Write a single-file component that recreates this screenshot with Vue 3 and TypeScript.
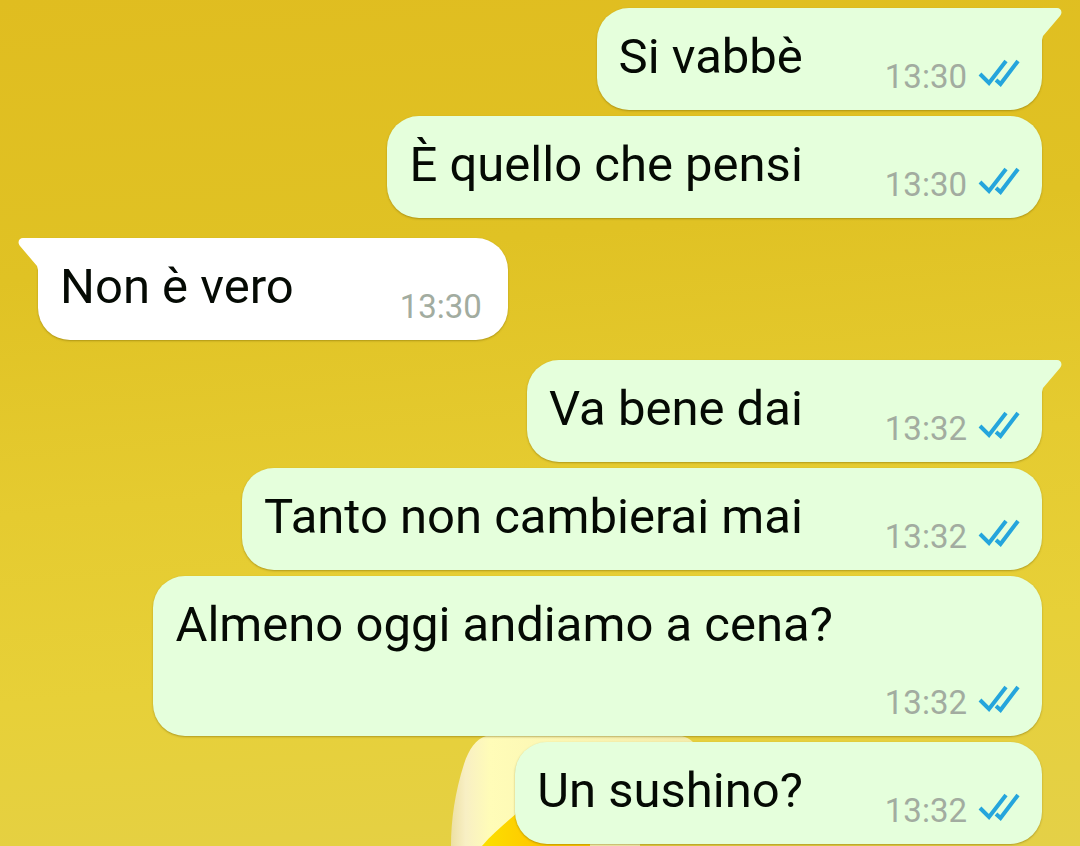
<script setup lang="ts">
interface Message {
  id: number
  text: string
  time: string
  sent: boolean
  first: boolean
}

const messages: Message[] = [
  { id: 1, text: 'Si vabbè', time: '13:30', sent: true, first: true },
  { id: 2, text: 'È quello che pensi', time: '13:30', sent: true, first: false },
  { id: 3, text: 'Non è vero', time: '13:30', sent: false, first: true },
  { id: 4, text: 'Va bene dai', time: '13:32', sent: true, first: true },
  { id: 5, text: 'Tanto non cambierai mai', time: '13:32', sent: true, first: false },
  { id: 6, text: 'Almeno oggi andiamo a cena?', time: '13:32', sent: true, first: false },
  { id: 7, text: 'Un sushino?', time: '13:32', sent: true, first: false },
]
</script>

<template>
  <main class="chat">
    <svg class="wallpaper" viewBox="0 0 260 110" aria-hidden="true">
      <defs>
        <linearGradient id="shell" x1="0" y1="0" x2="1" y2="0">
          <stop offset="0" stop-color="#ece0a4" />
          <stop offset="0.06" stop-color="#f8efc4" />
          <stop offset="0.16" stop-color="#fffcb8" />
          <stop offset="1" stop-color="#f4ecac" />
        </linearGradient>
        <linearGradient id="yolk" x1="0" y1="0" x2="1" y2="0">
          <stop offset="0" stop-color="#fbe000" />
          <stop offset="0.5" stop-color="#ffc800" />
        </linearGradient>
      </defs>
      <path d="M1 110C1 84 5 56 14 28C19 13 26 3 36 0H232C236 1 240 3 243 6V90H190V110Z" fill="url(#shell)" />
      <path d="M32 110C43 97 55 88 70 74H140V110Z" fill="url(#yolk)" />
    </svg>
    <ol class="messages">
      <li
        v-for="m in messages"
        :key="m.id"
        class="bubble"
        :class="{ sent: m.sent, received: !m.sent, first: m.first }"
      >
        <svg v-if="m.first" class="tail" viewBox="0 0 20 32" aria-hidden="true">
          <path d="M0 0H15C19 0 21 4 18 8L1 28L0 32Z" fill="currentColor" />
        </svg>
        <span class="text">{{ m.text }}</span>
        <span class="meta">
          <time>{{ m.time }}</time>
          <svg v-if="m.sent" class="ticks" viewBox="0 0 42 28" role="img" aria-label="Letto">
            <path d="M2 15L11 24L28 2M18 21L22.500 25L40 2" />
          </svg>
        </span>
      </li>
    </ol>
  </main>
</template>

<style>
body {
  margin: 0;
}
</style>

<style scoped>
.chat {
  position: relative;
  box-sizing: border-box;
  min-height: 100vh;
  overflow: hidden;
  padding: 8px 38px 2px;
  background: linear-gradient(175deg, #e0bd20 0%, #e0c224 30%, #e5cb30 55%, #e7d038 75%, #e4d047 100%);
  font-family: Roboto, "Liberation Sans", sans-serif;
}

.wallpaper {
  position: absolute;
  left: 450px;
  bottom: 0;
  width: 260px;
  height: 110px;
}

.messages {
  position: relative;
  display: flex;
  flex-direction: column;
  gap: 6px;
  margin: 0;
  padding: 0;
  list-style: none;
}

.bubble {
  position: relative;
  display: flex;
  flex-wrap: wrap;
  align-items: flex-end;
  justify-content: space-between;
  box-sizing: border-box;
  max-width: 88.5%;
  padding: 19px 22px 14px;
  gap: 18px 82px;
  border-radius: 32px;
  box-shadow: 0 1px 2px rgba(110, 90, 0, 0.45);
}

.sent {
  align-self: flex-end;
  background: #e5ffdc;
  color: #e5ffdc;
}

.received {
  align-self: flex-start;
  padding-right: 26px;
  column-gap: 106px;
  background: #fff;
  color: #fff;
}

.first:not(:first-child) {
  margin-top: 14px;
}

.sent.first {
  border-top-right-radius: 0;
}

.received.first {
  border-top-left-radius: 0;
}

.tail {
  position: absolute;
  top: 0;
  left: 100%;
  width: 20px;
  height: 32px;
}

.received .tail {
  right: 100%;
  left: auto;
  transform: scaleX(-1);
}

.text {
  padding-bottom: 9px;
  color: #050a04;
  font-size: 49px;
  line-height: 60px;
}

.meta {
  display: flex;
  align-items: center;
  gap: 11px;
  height: 40px;
  margin-left: auto;
  color: #a2aca0;
  font-size: 33px;
  line-height: 40px;
}

.meta time {
  padding-top: 2px;
}

.ticks {
  width: 42px;
  height: 28px;
  margin-bottom: 6px;
  fill: none;
  stroke: #25a5dc;
  stroke-width: 4;
}
</style>
